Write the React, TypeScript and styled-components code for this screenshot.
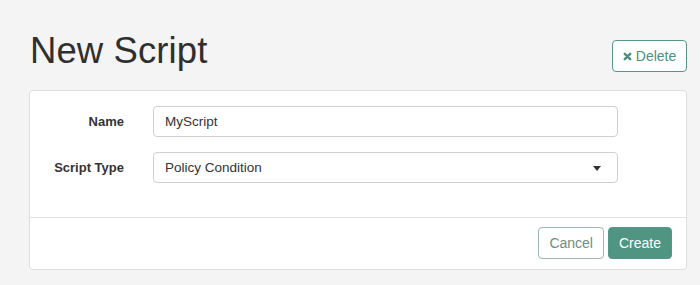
import React from 'react';
import styled, { createGlobalStyle } from 'styled-components';

const GlobalStyle = createGlobalStyle`
  html, body {
    margin: 0;
    padding: 0;
    background: #f4f4f4;
  }
  body {
    font-family: "Liberation Sans", Arial, sans-serif;
    color: #333;
  }
`;

const Page = styled.div`
  padding: 0 13px 0 29px;
  min-height: 285px;
  box-sizing: border-box;
`;

const Header = styled.div`
  display: flex;
  justify-content: space-between;
  align-items: flex-start;
  padding: 31px 0 18px 1px;
`;

const Title = styled.h1`
  margin: 0;
  font-size: 36.5px;
  line-height: 40px;
  font-weight: 400;
  color: #2f2f2f;
  letter-spacing: 0.1px;
`;

const Button = styled.button<{ $variant: 'outline' | 'muted' | 'primary' }>`
  height: 32px;
  padding: 0 10px;
  border-radius: 4px;
  font-family: "Liberation Sans", Arial, sans-serif;
  font-size: 14px;
  display: inline-flex;
  align-items: center;
  gap: 4px;
  cursor: pointer;
  box-sizing: border-box;
  border: 1px solid
    ${p => (p.$variant === 'muted' ? '#9cb8b0' : '#55988a')};
  background: ${p => (p.$variant === 'primary' ? '#509482' : '#fff')};
  color: ${p =>
    p.$variant === 'primary' ? '#fff' : p.$variant === 'muted' ? '#6e8d85' : '#4e8f7e'};

  svg {
    flex-shrink: 0;
  }
`;

const DeleteButton = styled(Button)`
  margin-top: 9px;
  width: 75px;
  padding: 0 8px;
  justify-content: center;
`;

const Panel = styled.div`
  background: #fff;
  border: 1px solid #dedede;
  border-radius: 4px;
`;

const PanelBody = styled.div`
  display: grid;
  grid-template-columns: 94px 1fr;
  column-gap: 29px;
  row-gap: 15px;
  align-items: center;
  padding: 15px 68px 34px 0;
`;

const Label = styled.label`
  text-align: right;
  font-weight: 700;
  font-size: 13px;
  color: #333;
`;

const Field = styled.div`
  position: relative;
  height: 31px;
  border: 1px solid #cfcfcf;
  border-radius: 4px;
  box-sizing: border-box;
  padding: 0 11px;
  display: flex;
  align-items: center;
  font-size: 13.5px;
  color: #333;
  background: #fff;
`;

const Caret = styled.span`
  position: absolute;
  right: 16px;
  top: 13px;
  width: 0;
  height: 0;
  border-left: 4px solid transparent;
  border-right: 4px solid transparent;
  border-top: 5px solid #333;
`;

const PanelFooter = styled.div`
  border-top: 1px solid #e0e0e0;
  display: flex;
  justify-content: flex-end;
  gap: 4px;
  padding: 9px 14px 10px 0;
`;

const TimesIcon = () => (
  <svg width="9" height="9" viewBox="0 0 10 10">
    <path d="M2 2 L8 8 M8 2 L2 8" stroke="#4e8f7e" strokeWidth="2.8" strokeLinecap="round" />
  </svg>
);

const App = () => {
  return (
    <>
      <GlobalStyle />
      <Page>
        <Header>
          <Title>New Script</Title>
          <DeleteButton $variant="outline">
            <TimesIcon />
            Delete
          </DeleteButton>
        </Header>
        <Panel>
          <PanelBody>
            <Label>Name</Label>
            <Field>MyScript</Field>
            <Label>Script Type</Label>
            <Field>
              Policy Condition
              <Caret />
            </Field>
          </PanelBody>
          <PanelFooter>
            <Button $variant="muted">Cancel</Button>
            <Button $variant="primary">Create</Button>
          </PanelFooter>
        </Panel>
      </Page>
    </>
  );
};

export default App;
